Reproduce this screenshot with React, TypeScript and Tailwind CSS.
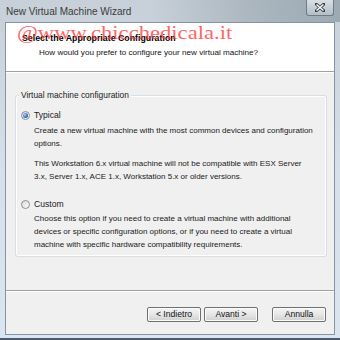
import React from "react";

function Radio({ checked }: { checked: boolean }) {
  return (
    <span className="flex h-[9px] w-[9px] shrink-0 items-center justify-center rounded-full border border-[#8d8d8d] bg-gradient-to-br from-[#d8d8d8] to-[#ffffff]">
      {checked && (
        <span className="h-[5px] w-[5px] rounded-full bg-[radial-gradient(circle_at_35%_35%,#9fd3ff,#1a5fb4_70%,#0d3f86)]" />
      )}
    </span>
  );
}

function Btn({ label }: { label: string }) {
  return (
    <button className="flex h-[15px] w-[54px] items-center justify-center rounded-[2px] border border-[#707070] bg-gradient-to-b from-[#f4f4f4] via-[#e6e6e6] to-[#d0d0d0] text-[8.6px] leading-none text-[#111] shadow-[inset_0_0_0_1px_#fbfbfb]">
      {label}
    </button>
  );
}

export default function App() {
  return (
    <div
      className="relative flex h-[340px] w-[340px] flex-col overflow-hidden bg-gradient-to-b from-[#c7d0d8] via-[#d6e0ea] to-[#dbe5ef] text-[#1a1a1a]"
      style={{ fontFamily: '"Liberation Sans", Arial, sans-serif' }}
    >
      {/* blurred title-bar backdrop */}
      <div className="pointer-events-none absolute left-[150px] top-0 h-[22px] w-[190px] bg-gradient-to-r from-transparent via-[#9aa7b0] to-[#7f8e98] opacity-60" />
      {/* title bar */}
      <div className="relative flex h-[22px] shrink-0 items-center pl-[6px]">
        <span className="text-[10px] text-[#3b3b3b]">New Virtual Machine Wizard</span>
      </div>
      {/* close button */}
      <div className="absolute right-[6px] top-0 flex h-[16px] w-[28px] items-center justify-center rounded-b-[3px] border border-t-0 border-[#6f7b86] bg-gradient-to-b from-[#d9dfe5] to-[#b3bec8]">
        <svg width="10" height="9" viewBox="0 0 10 9">
          <path d="M1 1 L9 8 M9 1 L1 8" stroke="#3a3f45" strokeWidth="3" strokeLinecap="square" />
          <path d="M1.5 1.5 L8.5 7.5 M8.5 1.5 L1.5 7.5" stroke="#ffffff" strokeWidth="1.4" />
        </svg>
      </div>

      {/* client area */}
      <div className="mx-[5px] flex h-[313px] flex-col border border-[#8595a6] bg-[#f0f0f0]">
        {/* header */}
        <div className="relative h-[49px] shrink-0 border-b border-[#a0a0a0] bg-white pl-[16px] pt-[10px]">
          <div className="text-[8.8px] font-bold leading-[11px] text-black">Select the Appropriate Configuration</div>
          <div className="mt-[3px] pl-[17px] text-[8.1px] leading-[11px] text-[#111]">
            How would you prefer to configure your new virtual machine?
          </div>
          <div
            className="pointer-events-none absolute left-[11px] top-[0px] origin-left scale-x-[1.19] text-[19px] leading-none text-[#ff3333] opacity-75"
            style={{ fontFamily: '"Liberation Serif", "Times New Roman", serif' }}
          >
            @www.chicchedicala.it
          </div>
        </div>
        <div className="h-px bg-white" />

        {/* body */}
        <div className="flex flex-1 flex-col pl-[9px] pr-[7px] pt-[22px]">
          <div className="relative rounded-[3px] border border-[#d5dfe5] px-[5px] pb-[5px] pt-[13px] shadow-[inset_0_0_0_1px_#ffffff]">
            <span className="absolute -top-[6px] left-[3px] bg-[#f0f0f0] px-[2px] text-[8.4px] leading-[11px]">
              Virtual machine configuration
            </span>
            <div className="flex items-center gap-[4px]">
              <Radio checked />
              <span className="text-[8.6px] leading-[13px]">Typical</span>
            </div>
            <div className="mt-[2px] whitespace-nowrap pl-[13px] text-[8px] leading-[13px]">
              <p>
                Create a new virtual machine with the most common devices and configuration
                <br />
                options.
              </p>
              <p className="mt-[7px]">
                This Workstation 6.x virtual machine will not be compatible with ESX Server
                <br />
                3.x, Server 1.x, ACE 1.x, Workstation 5.x or older versions.
              </p>
            </div>
            <div className="mt-[15px] flex items-center gap-[4px]">
              <Radio checked={false} />
              <span className="text-[8.6px] leading-[13px]">Custom</span>
            </div>
            <div className="mt-[1px] whitespace-nowrap pl-[13px] text-[8px] leading-[13px]">
              <p>
                Choose this option if you need to create a virtual machine with additional
                <br />
                devices or specific configuration options, or if you need to create a virtual
                <br />
                machine with specific hardware compatibility requirements.
              </p>
            </div>
          </div>
        </div>

        {/* footer */}
        <div className="h-[44px] shrink-0 border-t border-[#a0a0a0]">
          <div className="h-px bg-white" />
          <div className="flex justify-end gap-[3px] pr-[8px] pt-[15px]">
            <Btn label="< Indietro" />
            <Btn label="Avanti >" />
            <div className="w-[8px]" />
            <Btn label="Annulla" />
          </div>
        </div>
      </div>
      <div className="flex-1" />
      <div className="h-[2px] bg-[#4a5a70]" />
    </div>
  );
}
